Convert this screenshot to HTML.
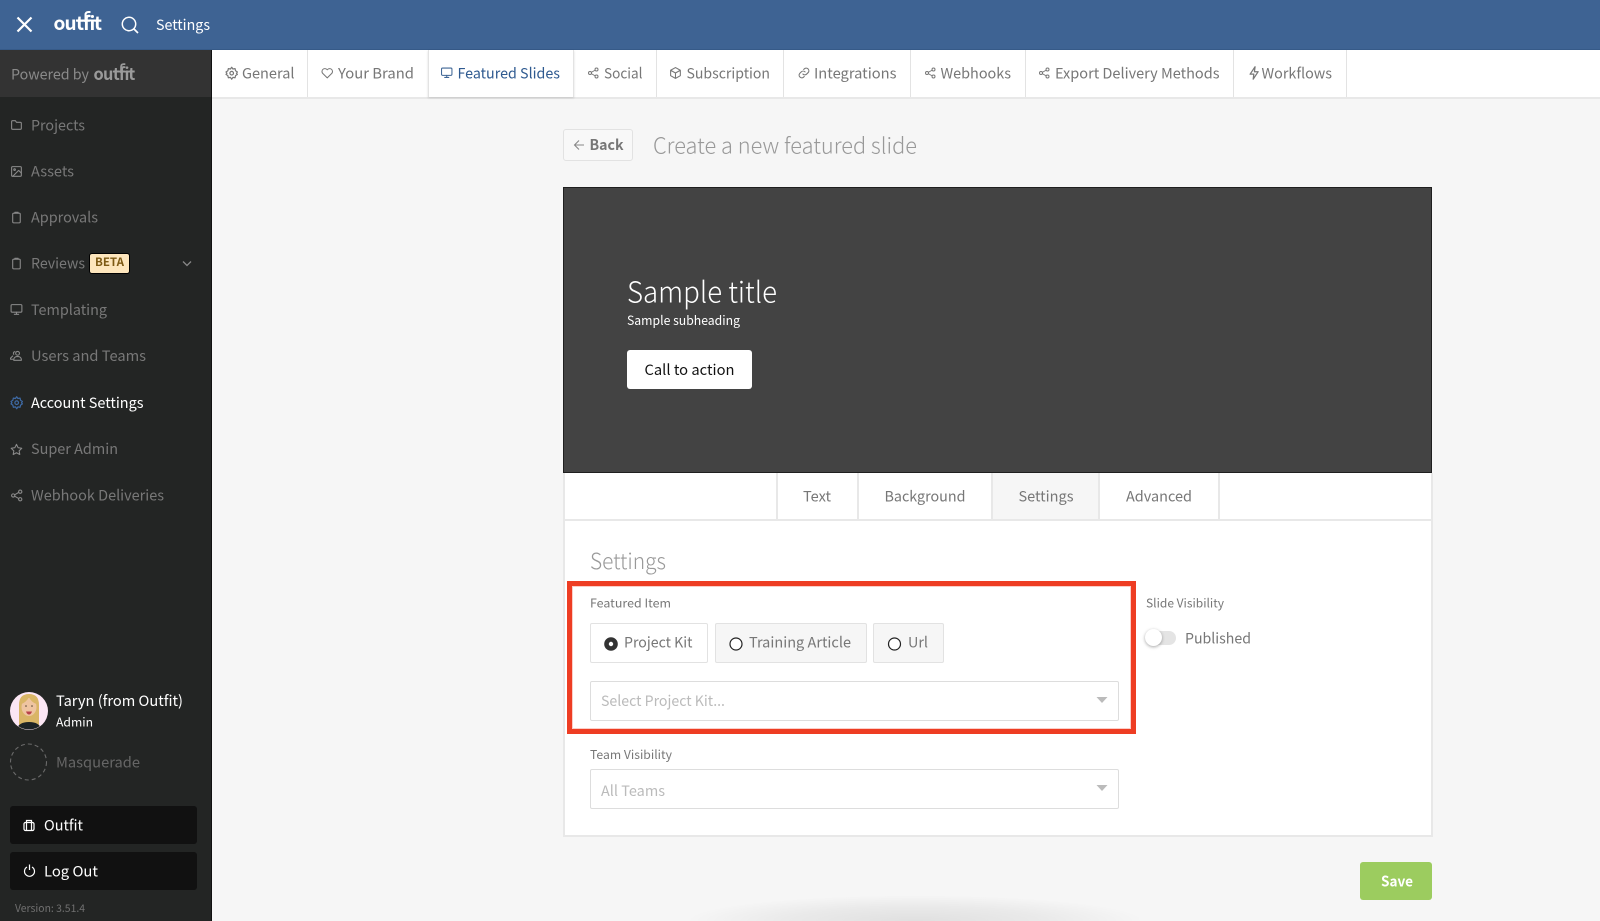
<!DOCTYPE html>
<html lang="en"><head><meta charset="utf-8"><title>Settings</title>
<style>
html,body{margin:0;padding:0;width:1600px;height:921px;overflow:hidden;background:#f6f6f6}
#p{position:relative;width:1600px;height:921px;overflow:hidden;background:#f6f6f6}
.b{position:absolute;box-sizing:border-box}
svg{position:absolute;left:0;top:0}
text{font-family:"Noto Sans CJK JP","Liberation Sans",sans-serif;white-space:pre}
.i{fill:none;stroke-width:2;stroke-linecap:round;stroke-linejoin:round}
</style></head><body><div id="p">
<div class="b" style="left:0;top:0;width:1600px;height:50px;background:#3e6393;border-bottom:1px solid #365a88"></div>
<div class="b" style="left:0;top:50px;width:212px;height:871px;background:#232524;border-right:1px solid #111"></div>
<div class="b" style="left:0;top:50px;width:211px;height:47px;background:#333"></div>
<div class="b" style="left:212px;top:50px;width:1388px;height:49px;background:#fff;border-bottom:2px solid #e8e8e8"></div>
<div class="b" style="left:307px;top:50px;width:1px;height:47px;background:#e3e3e3"></div>
<div class="b" style="left:428px;top:50px;width:146px;height:47px;background:#fff;border-left:1px solid #e3e3e3;border-right:1px solid #e3e3e3;box-shadow:0 1px 2px rgba(0,0,0,.15)"></div>
<div class="b" style="left:656px;top:50px;width:1px;height:47px;background:#e3e3e3"></div>
<div class="b" style="left:783px;top:50px;width:1px;height:47px;background:#e3e3e3"></div>
<div class="b" style="left:910px;top:50px;width:1px;height:47px;background:#e3e3e3"></div>
<div class="b" style="left:1025px;top:50px;width:1px;height:47px;background:#e3e3e3"></div>
<div class="b" style="left:1233px;top:50px;width:1px;height:47px;background:#e3e3e3"></div>
<div class="b" style="left:1346px;top:50px;width:1px;height:47px;background:#e3e3e3"></div>

<div class="b" style="left:563px;top:129px;width:70px;height:32px;background:#f8f8f8;border:1px solid #e2e2e2;border-radius:3px"></div>

<div class="b" style="left:563px;top:473px;width:870px;height:364px;background:#fff;border:2px solid #e8e8e8;border-top:0"></div>
<div class="b" style="left:565px;top:519px;width:866px;height:2px;background:#e8e8e8"></div>
<div class="b" style="left:992px;top:473px;width:107px;height:46px;background:#f6f6f6"></div>
<div class="b" style="left:776px;top:473px;width:2px;height:46px;background:#e8e8e8"></div>
<div class="b" style="left:857px;top:473px;width:2px;height:46px;background:#e8e8e8"></div>
<div class="b" style="left:991px;top:473px;width:2px;height:46px;background:#e8e8e8"></div>
<div class="b" style="left:1098px;top:473px;width:2px;height:46px;background:#e8e8e8"></div>
<div class="b" style="left:1218px;top:473px;width:2px;height:46px;background:#e8e8e8"></div>
<div class="b" style="left:563px;top:187px;width:869px;height:286px;background:#434343;border:1px solid #1f1f1f"></div>
<div class="b" style="left:626.500px;top:350px;width:125.500px;height:39px;background:#fff;border-radius:3px"></div>

<div class="b" style="left:567px;top:581px;width:569px;height:153px;border:5px solid #ee3d23;box-shadow:inset 0 0 0 1px rgba(238,61,35,.25)"></div>
<div class="b" style="left:590px;top:623px;width:118px;height:39.500px;background:#fff;border:1px solid #e2e2e2;border-radius:2px"></div>
<div class="b" style="left:715px;top:623px;width:152px;height:39.500px;background:#f6f6f6;border:1px solid #e2e2e2;border-radius:2px"></div>
<div class="b" style="left:873px;top:623px;width:71px;height:39.500px;background:#f6f6f6;border:1px solid #e2e2e2;border-radius:2px"></div>
<div class="b" style="left:590px;top:680.500px;width:529px;height:40px;background:#fff;border:1px solid #ddd;border-radius:2px"></div>
<div class="b" style="left:590px;top:769px;width:529px;height:40px;background:#fff;border:1px solid #ddd;border-radius:2px"></div>

<div class="b" style="left:1146px;top:631px;width:30px;height:14px;background:#e4e4e4;border-radius:7px"></div>
<div class="b" style="left:1145px;top:629px;width:17px;height:17px;background:#fff;border-radius:50%;box-shadow:0 1px 3px rgba(0,0,0,.35)"></div>

<div class="b" style="left:1360px;top:862px;width:72px;height:38px;background:#9ccc5f;border-radius:3px"></div>
<div class="b" style="left:680px;top:892px;width:470px;height:29px;background:radial-gradient(ellipse 230px 26px at 50% 100%,rgba(0,0,0,.09),rgba(0,0,0,.05) 55%,rgba(0,0,0,0))"></div>

<div class="b" style="left:10px;top:806px;width:187px;height:38px;background:#111;border-radius:3px"></div>
<div class="b" style="left:10px;top:852px;width:187px;height:38px;background:#111;border-radius:3px"></div>
<div class="b" style="left:89px;top:253px;width:41px;height:21px;background:#fde6bd;border:1px solid #000;border-radius:3px"></div>

<svg width="1600" height="921" viewBox="0 0 1600 921">
<defs>
<g id="folder"><path d="M3 6a2 2 0 0 1 2-2h5l2 3h7a2 2 0 0 1 2 2v9a2 2 0 0 1-2 2H5a2 2 0 0 1-2-2z"/></g>
<g id="image"><rect x="3" y="3" width="18" height="18" rx="2"/><circle cx="8.5" cy="8.5" r="1.5"/><path d="M21 15l-5-5L5 21"/></g>
<g id="clip"><rect x="5" y="4" width="14" height="18" rx="2"/><path d="M9 4V2.5h6V4"/></g>
<g id="mon"><rect x="2" y="3" width="20" height="14" rx="2"/><path d="M8 21h8M12 17v4"/></g>
<g id="users"><circle cx="14" cy="8" r="3.5"/><path d="M7 20v-1a6 6 0 0 1 6-5h2a6 6 0 0 1 6 5v2H7zM9 5a3 3 0 0 0-2 5M5 19H1v-2l4-4"/></g>
<g id="gear"><circle cx="12" cy="12" r="3"/><path d="M12 2l2 3 3.6-.6.8 3.6 3.1 2-1.6 2 1.6 2-3.1 2-.8 3.6-3.6-.6-2 3-2-3-3.6.6-.8-3.6-3.100-2 1.600-2-1.600-2 3.100-2 .8-3.600 3.600.6z"/></g>
<g id="star"><path d="M12 2.500l3 6.200 6.800 1-4.900 4.800 1.200 6.800-6.100-3.200-6.100 3.200 1.200-6.800-4.900-4.800 6.800-1z"/></g>
<g id="share"><circle cx="18" cy="5" r="3"/><circle cx="5" cy="12" r="3"/><circle cx="18" cy="19" r="3"/><path d="M8 10.500l7-4M8 13.500l7 4"/></g>
<g id="heart"><path d="M12 21L3.500 12.500a5.500 5.500 0 0 1 7.800-7.800l.7.7.7-.7a5.500 5.500 0 0 1 7.800 7.800z"/></g>
<g id="cube"><path d="M12 2l9 5v10l-9 5-9-5V7zM3 7l9 5 9-5M12 12v10"/></g>
<g id="link"><path d="M10 14a5 5 0 0 0 7 0l3-3a5 5 0 0 0-7-7l-1.500 1.500M14 10a5 5 0 0 0-7 0l-3 3a5 5 0 0 0 7 7l1.500-1.500"/></g>
<g id="zap"><path d="M13 2L5 14h6l-1 8 8-12h-6z"/></g>
<g id="logo">
<text y="30" font-size="19" font-weight="700" x="53.500 64.500 76 83 89.500 94">outfit</text>
</g>
</defs>

<!-- top bar -->
<path d="M17.500 17.500L31.500 31.500M31.500 17.500L17.500 31.500" stroke="#fff" stroke-width="2.200" fill="none"/>
<use href="#logo" fill="#fff"/>
<path d="M76 20.500H100M85.500 22V15q0-3 3-3h2" stroke="#fff" stroke-width="2" fill="none"/>
<circle cx="129" cy="24" r="6.700" fill="none" stroke="#fff" stroke-width="1.500"/>
<path d="M134 29L138 33" stroke="#fff" stroke-width="1.700"/>
<text x="156" y="30" font-size="14.500" fill="#fff" textLength="54" lengthAdjust="spacingAndGlyphs">Settings</text>

<!-- sidebar -->
<text x="11" y="79.500" font-size="14.500" fill="#8a8a8a" textLength="78" lengthAdjust="spacingAndGlyphs">Powered by</text>
<g transform="translate(47.500 53.600) scale(.86 .88)" fill="#9a9a9a">
<use href="#logo"/>
<path d="M76 20.500H100M85.500 22V15q0-3 3-3h2" stroke="#9a9a9a" stroke-width="2" fill="none"/>
</g>

<g stroke="#8a8a8a" class="i" stroke-width="2">
<use href="#folder" transform="translate(10 118.500) scale(.54)"/>
<use href="#image" transform="translate(10 165) scale(.54)"/>
<use href="#clip" transform="translate(10 211) scale(.54)"/>
<use href="#clip" transform="translate(10 257) scale(.54)"/>
<use href="#mon" transform="translate(10 303) scale(.54)"/>
<use href="#users" transform="translate(10 349) scale(.54)"/>
<use href="#star" transform="translate(10 443) scale(.54)"/>
<use href="#share" transform="translate(10.500 489) scale(.54)"/>
</g>
<use href="#gear" class="i" stroke="#3e6aa5" transform="translate(9.500 395.500) scale(.6)"/>
<g font-size="14.500" fill="#787878">
<text x="31" y="130.500" textLength="54" lengthAdjust="spacingAndGlyphs">Projects</text>
<text x="31" y="176.500" textLength="43" lengthAdjust="spacingAndGlyphs">Assets</text>
<text x="31" y="222.500" textLength="67" lengthAdjust="spacingAndGlyphs">Approvals</text>
<text x="31" y="268.500" textLength="54" lengthAdjust="spacingAndGlyphs">Reviews</text>
<text x="31" y="315" textLength="76" lengthAdjust="spacingAndGlyphs">Templating</text>
<text x="31" y="361" textLength="115" lengthAdjust="spacingAndGlyphs">Users and Teams</text>
<text x="31" y="408" fill="#fff" textLength="112.500" lengthAdjust="spacingAndGlyphs">Account Settings</text>
<text x="31" y="454" textLength="87" lengthAdjust="spacingAndGlyphs">Super Admin</text>
<text x="31" y="500.500" textLength="133" lengthAdjust="spacingAndGlyphs">Webhook Deliveries</text>
</g>
<text x="95" y="266" font-size="11.500" font-weight="700" fill="#7d5a14" textLength="29" lengthAdjust="spacingAndGlyphs">BETA</text>
<path d="M183 261.500l4 4 4-4" fill="none" stroke="#888" stroke-width="1.300"/>

<!-- avatar -->
<circle cx="29" cy="711" r="19" fill="#fbe6f4"/>
<clipPath id="av"><circle cx="29" cy="711" r="18.500"/></clipPath>
<g clip-path="url(#av)">
<path d="M19 730V705q0-11 10-11t10 11v25l-4-2H23z" fill="#d9b566"/>
<ellipse cx="29" cy="707" rx="7.500" ry="9" fill="#eec4a0"/>
<path d="M21.500 704q5-2 7.500-7 2 5 7.500 7v-6l-7-3-8 3z" fill="#d9b566"/>
<path d="M16 732q1-10 13-10t13 10z" fill="#1c2226"/>
<path d="M26 711.500h6q-1 3-3 3t-3-3z" fill="#b8424a"/>
<circle cx="26" cy="706" r=".8" fill="#543"/><circle cx="32" cy="706" r=".8" fill="#543"/>
</g>
<circle cx="28.500" cy="762" r="18" fill="none" stroke="#6a6a6a" stroke-width="1.100" stroke-dasharray="4 3"/>
<text x="56" y="706" font-size="14.500" fill="#fff" textLength="127" lengthAdjust="spacingAndGlyphs">Taryn (from Outfit)</text>
<text x="56" y="726.500" font-size="12" fill="#fff" textLength="37" lengthAdjust="spacingAndGlyphs">Admin</text>
<text x="56" y="767.500" font-size="14.500" fill="#666" textLength="84" lengthAdjust="spacingAndGlyphs">Masquerade</text>
<g fill="none" stroke="#fff" stroke-width="1.200">
<rect x="24" y="822.500" width="10" height="8" rx="1.500"/><path d="M26.500 822.500v-2h5v2M26.500 822.500v8M31.500 822.500v8"/>
<path d="M27 867a5 5 0 1 0 5 0M29.500 864.500v5.500"/>
</g>
<text x="44" y="830.500" font-size="14.500" fill="#fff" textLength="39" lengthAdjust="spacingAndGlyphs">Outfit</text>
<text x="44" y="876.500" font-size="14.500" fill="#fff" textLength="54" lengthAdjust="spacingAndGlyphs">Log Out</text>
<text x="15" y="912" font-size="10.500" fill="#707070" textLength="70" lengthAdjust="spacingAndGlyphs">Version: 3.51.4</text>

<!-- tab icons -->
<g class="i" stroke="#777" stroke-width="2">
<use href="#gear" transform="translate(224.500 66) scale(.6)"/>
<use href="#heart" transform="translate(321 67) scale(.52)"/>
<use href="#share" transform="translate(587.500 67) scale(.5)"/>
<use href="#cube" transform="translate(669 66.500) scale(.54)"/>
<use href="#link" transform="translate(797.500 66.500) scale(.54)"/>
<use href="#share" transform="translate(924.500 67) scale(.5)"/>
<use href="#share" transform="translate(1038.500 67) scale(.5)"/>
<use href="#zap" transform="translate(1247 65.500) scale(.62)"/>
</g>
<use href="#mon" class="i" stroke="#3e6595" transform="translate(440.500 66.500) scale(.52)"/>
<g font-size="14.500" fill="#777">
<text x="242" y="78.300" textLength="52.500" lengthAdjust="spacingAndGlyphs">General</text>
<text x="338" y="78.300" textLength="76" lengthAdjust="spacingAndGlyphs">Your Brand</text>
<text x="457.500" y="78.300" fill="#2f5a90" textLength="102.500" lengthAdjust="spacingAndGlyphs">Featured Slides</text>
<text x="604" y="78.300" textLength="38.500" lengthAdjust="spacingAndGlyphs">Social</text>
<text x="686.500" y="78.300" textLength="83.500" lengthAdjust="spacingAndGlyphs">Subscription</text>
<text x="814" y="78.300" textLength="82.500" lengthAdjust="spacingAndGlyphs">Integrations</text>
<text x="940.500" y="78.300" textLength="70.500" lengthAdjust="spacingAndGlyphs">Webhooks</text>
<text x="1055" y="78.300" textLength="164.500" lengthAdjust="spacingAndGlyphs">Export Delivery Methods</text>
<text x="1261.500" y="78.300" textLength="70.500" lengthAdjust="spacingAndGlyphs">Workflows</text>
</g>

<!-- page header -->
<path d="M584 145h-9m4-4.500l-4.500 4.500 4.500 4.500" fill="none" stroke="#888" stroke-width="1.100"/>
<text x="589.500" y="150" font-size="14.500" font-weight="700" fill="#777" textLength="34" lengthAdjust="spacingAndGlyphs">Back</text>
<text x="653" y="153.300" font-size="22" font-weight="300" fill="#999" textLength="264" lengthAdjust="spacingAndGlyphs">Create a new featured slide</text>

<!-- preview -->
<text x="627" y="302.500" font-size="29" font-weight="300" fill="#fff" textLength="150" lengthAdjust="spacingAndGlyphs">Sample title</text>
<text x="627" y="325" font-size="12.500" fill="#fff" textLength="113" lengthAdjust="spacingAndGlyphs">Sample subheading</text>
<text x="644.500" y="375" font-size="14.500" fill="#111" textLength="90" lengthAdjust="spacingAndGlyphs">Call to action</text>

<!-- editor tabs -->
<g font-size="14.500" fill="#777">
<text x="803" y="501.500" textLength="28" lengthAdjust="spacingAndGlyphs">Text</text>
<text x="884.500" y="501.500" textLength="81" lengthAdjust="spacingAndGlyphs">Background</text>
<text x="1018.500" y="501.500" textLength="55" lengthAdjust="spacingAndGlyphs">Settings</text>
<text x="1126" y="501.500" textLength="66" lengthAdjust="spacingAndGlyphs">Advanced</text>
</g>
<text x="590" y="569" font-size="22" font-weight="300" fill="#999" textLength="76" lengthAdjust="spacingAndGlyphs">Settings</text>
<g font-size="12" fill="#777">
<text x="590" y="607.500" textLength="81" lengthAdjust="spacingAndGlyphs">Featured Item</text>
<text x="590" y="759" textLength="82" lengthAdjust="spacingAndGlyphs">Team Visibility</text>
<text x="1146" y="607.500" textLength="78" lengthAdjust="spacingAndGlyphs">Slide Visibility</text>
</g>
<g font-size="14.500" fill="#777">
<text x="624" y="647.500" textLength="68.500" lengthAdjust="spacingAndGlyphs">Project Kit</text>
<text x="749" y="647.500" textLength="102" lengthAdjust="spacingAndGlyphs">Training Article</text>
<text x="908" y="647.500" textLength="20" lengthAdjust="spacingAndGlyphs">Url</text>
<text x="1185" y="643.500" textLength="66" lengthAdjust="spacingAndGlyphs">Published</text>
</g>
<circle cx="611" cy="644" r="6.800" fill="#333"/><circle cx="611" cy="644" r="2.200" fill="#fff"/>
<circle cx="736" cy="644" r="6" fill="#fff" stroke="#222" stroke-width="1.200"/>
<circle cx="894.500" cy="644" r="6" fill="#fff" stroke="#222" stroke-width="1.200"/>
<g font-size="14.500" fill="#bbb">
<text x="601" y="706" textLength="124" lengthAdjust="spacingAndGlyphs">Select Project Kit...</text>
<text x="601" y="796" textLength="64" lengthAdjust="spacingAndGlyphs">All Teams</text>
</g>
<path d="M1096.500 697h11l-5.500 6zM1096.500 785h11l-5.500 6z" fill="#bbb"/>
<text x="1381" y="886.500" font-size="14.500" font-weight="700" fill="#fff" textLength="32" lengthAdjust="spacingAndGlyphs">Save</text>
</svg>
</div></body></html>
